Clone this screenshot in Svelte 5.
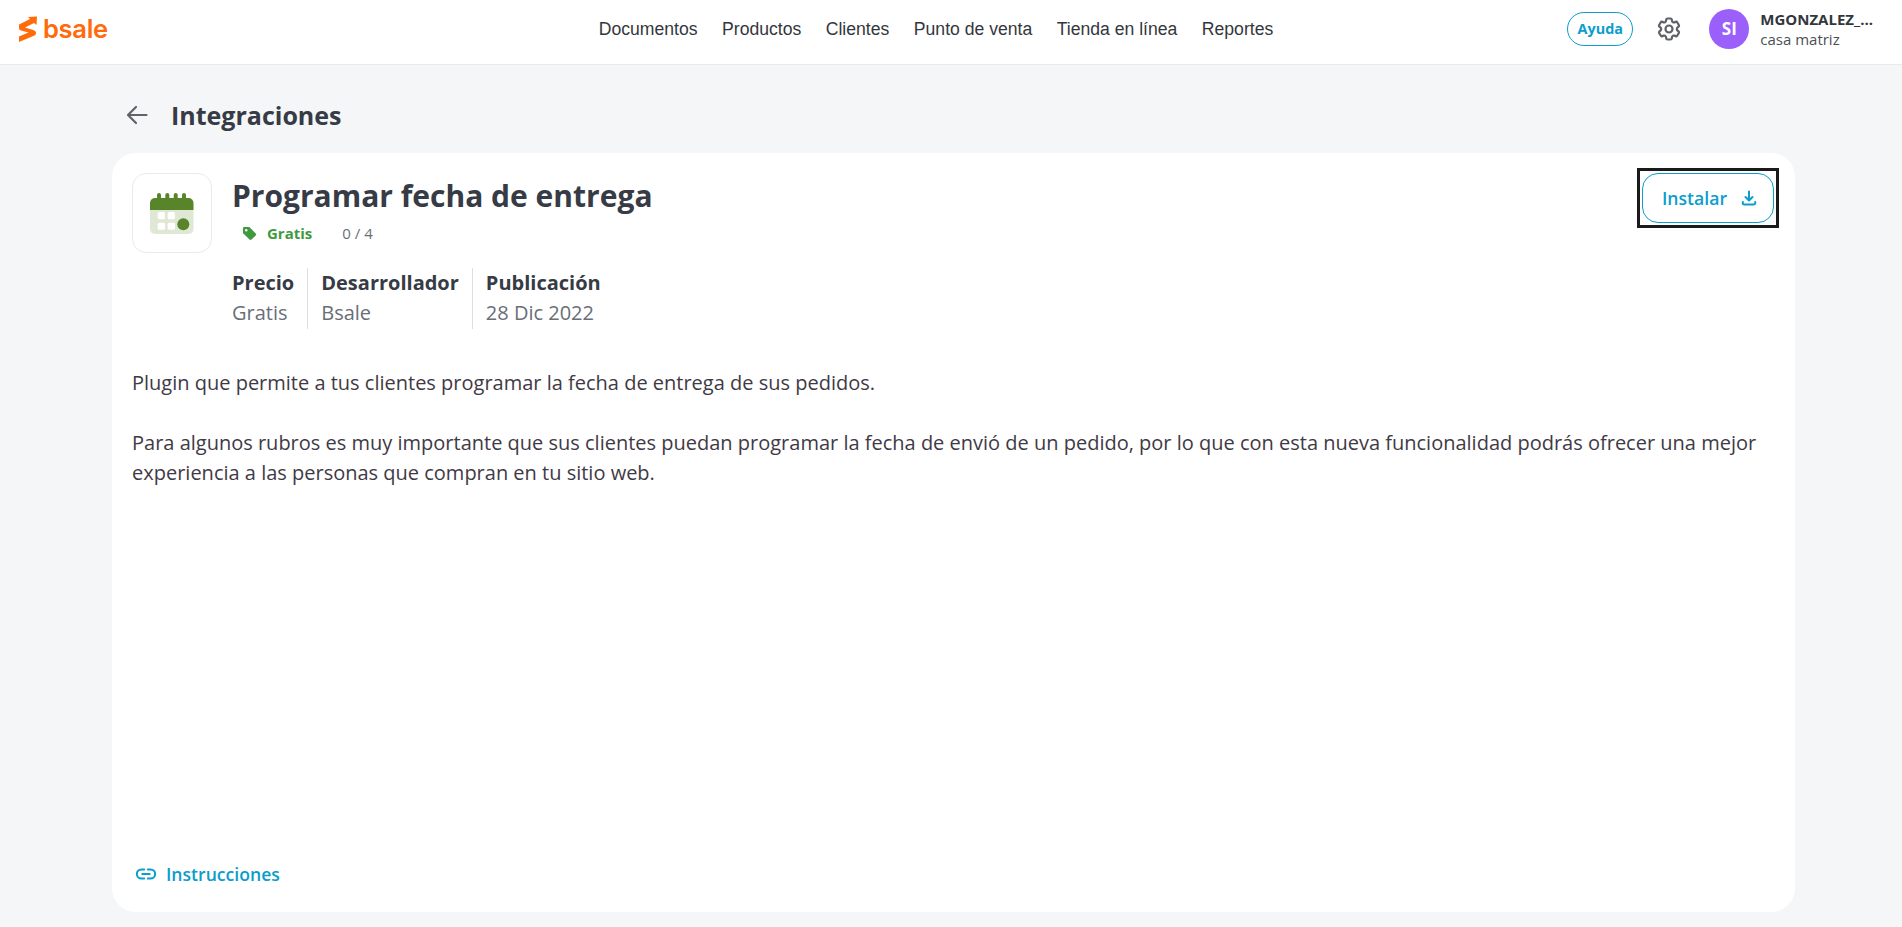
<script>
  const nav = ['Documentos', 'Productos', 'Clientes', 'Punto de venta', 'Tienda en línea', 'Reportes'];
  const meta = [
    { label: 'Precio', value: 'Gratis' },
    { label: 'Desarrollador', value: 'Bsale' },
    { label: 'Publicación', value: '28 Dic 2022' }
  ];
</script>

<div class="page">
  <header class="topbar">
    <div class="brand">
      <svg class="logo-mark" viewBox="0 0 18 26" width="18" height="26" aria-hidden="true">
        <path d="M0 8.500 L11 3 L9 1 L18 .5 L17.500 9 L15 7 L6 11.500 L14 14 C17.500 15 18 18 15.500 19.500 L0 26 L0 20.500 L9.500 16.500 L2 14.500 C0 14 0 12 0 11 Z" fill="#ff6b0a"/>
      </svg>
      <span class="wordmark">bsale</span>
    </div>
    <nav class="nav">
      {#each nav as item}
        <span>{item}</span>
      {/each}
    </nav>
    <div class="user-area">
      <span class="help">Ayuda</span>
      <svg class="gear" viewBox="0 0 24 24" width="28" height="28" fill="none" stroke="#5f6368" stroke-width="1.900" stroke-linecap="round" stroke-linejoin="round" aria-hidden="true">
        <path d="M9.594 3.940c.09-.542.56-.94 1.110-.94h2.593c.55 0 1.020.398 1.110.94l.213 1.281c.063.374.313.686.645.87.074.04.147.083.22.127.324.196.72.257 1.075.124l1.217-.456a1.125 1.125 0 0 1 1.370.49l1.296 2.247a1.125 1.125 0 0 1-.26 1.431l-1.003.827c-.293.24-.438.613-.431.992a6.759 6.759 0 0 1 0 .255c-.007.378.138.75.43.99l1.005.828c.424.35.534.954.26 1.430l-1.298 2.247a1.125 1.125 0 0 1-1.369.491l-1.217-.456c-.355-.133-.75-.072-1.076.124a6.570 6.570 0 0 1-.22.128c-.331.183-.581.495-.644.869l-.213 1.280c-.09.543-.56.941-1.110.941h-2.594c-.55 0-1.020-.398-1.110-.94l-.213-1.281c-.062-.374-.312-.686-.644-.87a6.520 6.520 0 0 1-.22-.127c-.325-.196-.72-.257-1.076-.124l-1.217.456a1.125 1.125 0 0 1-1.369-.49l-1.297-2.247a1.125 1.125 0 0 1 .26-1.431l1.004-.827c.292-.24.437-.613.43-.992a6.932 6.932 0 0 1 0-.255c.007-.378-.138-.75-.43-.99l-1.004-.828a1.125 1.125 0 0 1-.26-1.430l1.297-2.247a1.125 1.125 0 0 1 1.370-.491l1.216.456c.356.133.751.072 1.076-.124.072-.044.146-.087.22-.128.332-.183.582-.495.644-.869l.214-1.281z"/>
        <circle cx="12" cy="12" r="3"/>
      </svg>
      <span class="avatar">SI</span>
      <div class="user-text">
        <strong>MGONZALEZ_...</strong>
        <span>casa matriz</span>
      </div>
    </div>
  </header>

  <main class="content">
    <div class="page-title">
      <svg viewBox="0 0 24 24" width="24" height="24" fill="none" stroke="#5f6368" stroke-width="2.200" stroke-linecap="round" stroke-linejoin="round" aria-hidden="true">
        <path d="M21.500 12H3M11 4l-8 8 8 8"/>
      </svg>
      <h2>Integraciones</h2>
    </div>

    <section class="card">
      <div class="head">
        <div class="icon-box">
          <svg viewBox="0 0 44 41" width="44" height="41" aria-hidden="true">
            <path d="M0 14h43.500v22a5 5 0 0 1-5 5H5a5 5 0 0 1-5-5z" fill="#dfe8d5"/>
            <path d="M0 17V10a5 5 0 0 1 5-5h33.500a5 5 0 0 1 5 5v7z" fill="#588529"/>
            <rect x="7" y="0" width="4" height="8" rx="2" fill="#588529"/>
            <rect x="15.300" y="0" width="4" height="8" rx="2" fill="#588529"/>
            <rect x="23.700" y="0" width="4" height="8" rx="2" fill="#588529"/>
            <rect x="32" y="0" width="4" height="8" rx="2" fill="#588529"/>
            <rect x="7.700" y="19" width="7.300" height="7.300" rx="1.500" fill="#fff"/>
            <rect x="17.700" y="19" width="7.300" height="7.300" rx="1.500" fill="#fff"/>
            <rect x="7.700" y="29.700" width="7.300" height="7" rx="1.500" fill="#fff"/>
            <rect x="17.700" y="29.700" width="7.300" height="7" rx="1.500" fill="#fff"/>
            <circle cx="33.300" cy="31.300" r="6" fill="#588529"/>
          </svg>
        </div>
        <div class="head-main">
          <h1>Programar fecha de entrega</h1>
          <div class="tags">
            <svg viewBox="0 0 16 16" width="15" height="15" aria-hidden="true">
              <path d="M1 2.500A1.500 1.500 0 0 1 2.500 1h4.600a1.500 1.500 0 0 1 1 .4l6.500 6.500a1.500 1.500 0 0 1 0 2.100l-4.500 4.500a1.500 1.500 0 0 1-2.100 0L1.400 8.100a1.500 1.500 0 0 1-.4-1z" fill="#3f9a3f"/>
              <circle cx="4.500" cy="4.500" r="1.300" fill="#fff"/>
            </svg>
            <span class="free">Gratis</span>
            <span class="count">0 / 4</span>
          </div>
        </div>
        <div class="install-focus">
          <button class="install">
            <span>Instalar</span>
            <svg viewBox="0 0 16 16" width="16" height="16" fill="none" stroke="#0b9dcc" stroke-width="2" stroke-linecap="round" stroke-linejoin="round" aria-hidden="true">
              <path d="M8 1.500v8.500M4.500 7 8 10.500 11.500 7M1.800 12v1a1.500 1.500 0 0 0 1.500 1.500h9.400a1.500 1.500 0 0 0 1.500-1.500v-1"/>
            </svg>
          </button>
        </div>
      </div>

      <dl class="meta">
        {#each meta as m}
          <div class="meta-item">
            <dt>{m.label}</dt>
            <dd>{m.value}</dd>
          </div>
        {/each}
      </dl>

      <div class="description">
        <p>Plugin que permite a tus clientes programar la fecha de entrega de sus pedidos.</p>
        <p>Para algunos rubros es muy importante que sus clientes puedan programar la fecha de envió de un pedido, por lo que con esta nueva funcionalidad podrás ofrecer una mejor experiencia a las personas que compran en tu sitio web.</p>
      </div>

      <div class="instructions">
        <svg viewBox="0 0 24 24" width="22" height="22" fill="none" stroke="#0b9dcc" stroke-width="2.200" stroke-linecap="round" aria-hidden="true">
          <path d="M10 7H7a5 5 0 0 0 0 10h3M14 7h3a5 5 0 0 1 0 10h-3M8 12h8"/>
        </svg>
        <span>Instrucciones</span>
      </div>
    </section>
  </main>
</div>

<style>
  :global(body) {
    margin: 0;
    background: #f5f6f8;
    font-family: "Open Sans", "Noto Sans", sans-serif;
  }
  .page {
    height: 927px;
    display: flex;
    flex-direction: column;
    overflow: hidden;
    background: #f5f6f8;
  }
  .topbar {
    height: 65px;
    box-sizing: border-box;
    flex: none;
    background: #fff;
    border-bottom: 1px solid #e9eaec;
    display: grid;
    grid-template-columns: 1fr auto 1fr;
    align-items: center;
    padding: 0 20px 7px 19px;
  }
  .brand {
    display: flex;
    align-items: center;
    gap: 6px;
  }
  .wordmark {
    font-family: "Inter", "Open Sans", sans-serif;
    font-weight: 600;
    font-size: 25.500px;
    line-height: 1;
    color: #ff6b0a;
    letter-spacing: -0.3px;
    margin-top: 1px;
  }
  .nav {
    display: flex;
    gap: 24.500px;
    font-family: "Liberation Sans", Arial, sans-serif;
    font-size: 17.600px;
    color: #33373d;
    margin: 1px 29px 0 0;
  }
  .user-area {
    display: flex;
    align-items: center;
    justify-content: flex-end;
    padding-right: 9px;
  }
  .help {
    width: 66px;
    height: 34px;
    box-sizing: border-box;
    border: 1px solid #0b9dcc;
    border-radius: 17px;
    display: flex;
    align-items: center;
    justify-content: center;
    color: #0b9dcc;
    font-size: 14.400px;
    font-weight: 700;
    margin-right: 22px;
  }
  .gear {
    margin-right: 26px;
  }
  .avatar {
    width: 40px;
    height: 40px;
    border-radius: 50%;
    background: #9b5ffb;
    color: #fff;
    font-size: 17px;
    font-weight: 700;
    display: flex;
    align-items: center;
    justify-content: center;
    margin-right: 11px;
  }
  .user-text {
    display: flex;
    flex-direction: column;
    font-size: 15px;
    line-height: 20px;
    color: #4b4f56;
  }
  .user-text strong {
    color: #33373d;
    font-weight: 700;
  }
  .content {
    padding: 0 107px 0 112px;
    flex: 1;
    display: flex;
    flex-direction: column;
    min-height: 0;
  }
  .page-title {
    height: 88px;
    box-sizing: border-box;
    padding: 12px 0 0 13px;
    flex: none;
    display: flex;
    align-items: center;
    gap: 22px;
  }
  .page-title h2 {
    margin: 0;
    font-size: 25px;
    font-weight: 700;
    color: #363b45;
  }
  .card {
    background: #fff;
    border-radius: 24px;
    height: 759px;
    box-sizing: border-box;
    padding: 20px 20px 0 20px;
    display: flex;
    flex-direction: column;
    position: relative;
  }
  .head {
    display: flex;
    align-items: flex-start;
    gap: 20px;
  }
  .icon-box {
    width: 80px;
    height: 80px;
    box-sizing: border-box;
    flex: none;
    border: 1px solid #e9eaec;
    border-radius: 14px;
    display: flex;
    align-items: center;
    justify-content: center;
  }
  .head-main {
    flex: 1;
    min-width: 0;
  }
  h1 {
    margin: 0;
    font-size: 30px;
    line-height: 46px;
    font-weight: 700;
    color: #363b45;
  }
  .tags {
    display: flex;
    align-items: center;
    padding-left: 10px;
    height: 24px;
    margin-top: 2px;
  }
  .free {
    color: #3f9a3f;
    font-size: 15px;
    font-weight: 700;
    margin-left: 10px;
  }
  .count {
    color: #696e78;
    font-size: 15px;
    margin-left: 30px;
  }
  .install-focus {
    border: 3px solid #1a1a1a;
    margin: -5px -4px 0 0;
    padding: 2px;
    flex: none;
  }
  .install {
    width: 132px;
    height: 50px;
    background: #fff;
    border: 1px solid #0b9dcc;
    border-radius: 16px;
    color: #0b9dcc;
    font-family: inherit;
    font-size: 17.600px;
    font-weight: 600;
    display: flex;
    align-items: center;
    justify-content: center;
    gap: 14px;
    padding: 0 0 0 3px;
  }
  .meta {
    display: flex;
    margin: 15px 0 0 100px;
  }
  .meta-item {
    padding: 0 13px;
    border-left: 1px solid #dcdee1;
    height: 61px;
  }
  .meta-item:first-child {
    border-left: none;
    padding-left: 0;
  }
  dt {
    font-size: 20px;
    line-height: 30px;
    font-weight: 700;
    color: #363b45;
  }
  dd {
    margin: 0;
    font-size: 20px;
    line-height: 30px;
    color: #696e78;
  }
  .description {
    margin-top: 39px;
    font-size: 20px;
    line-height: 30px;
    color: #3f3a45;
  }
  .description p {
    margin: 0 0 30px;
  }
  .instructions {
    position: absolute;
    left: 23px;
    bottom: 26px;
    display: flex;
    align-items: center;
    gap: 9px;
    color: #0b9dcc;
    font-size: 17.600px;
    font-weight: 600;
  }
</style>
